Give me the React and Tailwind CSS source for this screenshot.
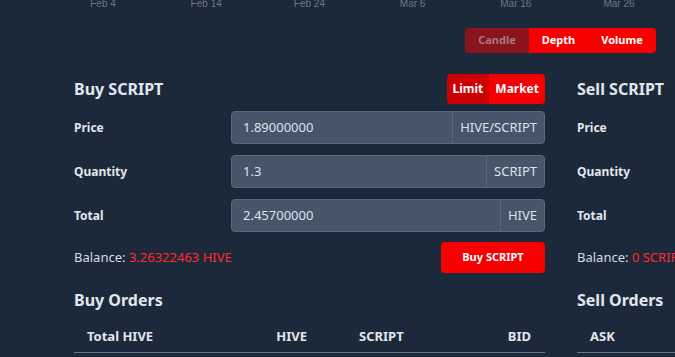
import React from 'react';

const ticks = ['Feb 4', 'Feb 14', 'Feb 24', 'Mar 6', 'Mar 16', 'Mar 26'];

function Field({ label, value, unit }) {
  return (
    <div className="flex items-center h-[33px]">
      <div className="w-[157px] text-[12px] font-bold text-[#e2e6ec]">{label}</div>
      {value !== undefined && (
        <div className="flex-1 flex h-full bg-[#465569] border border-[#5b6879] rounded-[4px] text-[13px] text-[#dde2e9]">
          <div className="flex-1 flex items-center pl-[11px]">{value}</div>
          <div className="flex items-center px-[7px] border-l border-[#5b6879]">{unit}</div>
        </div>
      )}
    </div>
  );
}

function Panel({ side, balance, showInputs }) {
  const coin = 'SCRIPT';
  return (
    <div className="w-[471px] shrink-0">
      <div className="flex items-center justify-between h-[30px]">
        <h2 className="text-[16px] font-bold text-[#e2e6ec]">{side} {coin}</h2>
        {showInputs && (
          <div className="flex h-[30px] rounded-[4px] overflow-hidden text-[12px] font-bold text-white">
            <button className="px-[6px] bg-[#cc0000]">Limit</button>
            <button className="px-[6px] bg-[#f40000]">Market</button>
          </div>
        )}
      </div>
      <div className="mt-[7px] flex flex-col gap-[11px]">
        <Field label="Price" value={showInputs ? '1.89000000' : undefined} unit="HIVE/SCRIPT" />
        <Field label="Quantity" value={showInputs ? '1.3' : undefined} unit="SCRIPT" />
        <Field label="Total" value={showInputs ? '2.45700000' : undefined} unit="HIVE" />
      </div>
      <div className="mt-[10px] flex items-center justify-between h-[31px]">
        <div className="text-[13px] text-[#d6dbe2]">
          Balance: <span className="text-[#ff2b2b]">{balance}</span>
        </div>
        {showInputs && (
          <button className="w-[104px] h-[31px] bg-[#f70000] rounded-[4px] text-[11px] font-bold text-white">
            Buy {coin}
          </button>
        )}
      </div>
      <h3 className="mt-[15px] text-[16px] font-bold text-[#e2e6ec] leading-[24px]">{side} Orders</h3>
      <div className="mt-[15px] border-b border-[#68768a] h-[26px] flex items-start text-[13px] font-bold text-[#e2e6ec]">
        {side === 'Buy' ? (
          <>
            <div className="w-[190px] pl-[13px]">Total HIVE</div>
            <div className="w-[43px] text-right">HIVE</div>
            <div className="w-[120px] pl-[52px]">SCRIPT</div>
            <div className="flex-1 text-right pr-[14px]">BID</div>
          </>
        ) : (
          <>
            <div className="w-[120px] pl-[13px]">ASK</div>
            <div className="w-[120px]">SCRIPT</div>
            <div className="w-[120px]">HIVE</div>
            <div className="flex-1">Total HIVE</div>
          </>
        )}
      </div>
    </div>
  );
}

export default function App() {
  return (
    <div
      className="w-[675px] h-[357px] overflow-hidden bg-[#1c293b]"
      style={{ fontFamily: '"Noto Sans", sans-serif' }}
    >
      {/* chart axis */}
      <div className="relative h-[10px] -mt-[1px] text-[10px] leading-[10px] text-[#6c7785] font-['Liberation_Sans',sans-serif]">
        {ticks.map((t, i) => (
          <span key={t} className="absolute top-0 -translate-x-1/2" style={{ left: 103 + i * 103.2 }}>
            {t}
          </span>
        ))}
      </div>

      <div className="flex justify-end pr-[19px] mt-[19px]">
        <div className="flex h-[25px] rounded-[4px] overflow-hidden text-[11px] font-bold">
          <button className="w-[64px] bg-[#8b131b] text-[#a27a80]">Candle</button>
          <button className="w-[59px] bg-[#f70000] text-white">Depth</button>
          <button className="w-[68px] bg-[#f70000] text-white">Volume</button>
        </div>
      </div>

      <div className="flex gap-[32px] pl-[74px] mt-[21px]">
        <Panel side="Buy" balance="3.26322463 HIVE" showInputs />
        <Panel side="Sell" balance="0 SCRIPT" showInputs={false} />
      </div>
    </div>
  );
}
